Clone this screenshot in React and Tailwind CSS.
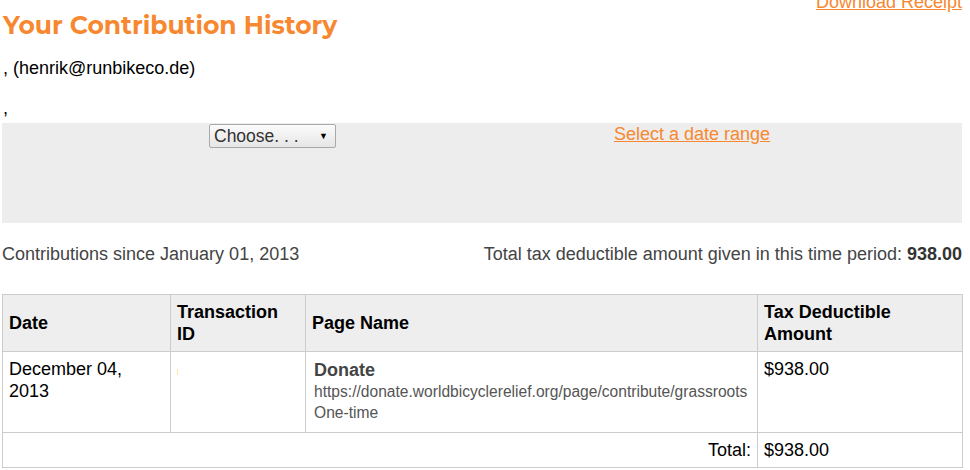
export default function App() {
  const orange = "text-[#f7882f]";
  const cell = "border border-[#cccccc] px-[6px]";
  return (
    <div className="w-[970px] h-[470px] overflow-hidden bg-white font-['Liberation_Sans',Arial,sans-serif] text-black">
      <div className="flex justify-between items-start pl-[3px] pr-[8px] h-[40px]">
        <h1 className={`font-['Montserrat','Open_Sans',sans-serif] font-bold text-[25px] leading-[30px] mt-[10px] ${orange}`}>
          Your Contribution History
        </h1>
        <a className={`text-[18px] leading-[22px] underline -mt-[9px] ${orange}`} href="#">
          Download Receipt
        </a>
      </div>
      <div className="pl-[3px] mt-[17px] text-[18px] leading-[22px]">, (henrik@runbikeco.de)</div>
      <div className="pl-[3px] mt-[18px] text-[18px] leading-[22px] h-[26px]">,</div>
      <div className="mx-[2px] w-[960px] h-[100px] bg-[#ededed] flex items-start">
        <div className="w-[207px] shrink-0" />
        <div className="w-[127px] h-[24px] mt-[1px] border border-[#a9a9a9] rounded-[2px] bg-gradient-to-b from-[#fbfbfb] to-[#e6e6e6] flex items-center justify-between pl-[4px] pr-[7px] text-[17.5px] leading-[20px] text-[#333]">
          <span>Choose. . .</span>
          <span className="text-[9px] text-black">▼</span>
        </div>
        <div className="w-[278px] shrink-0" />
        <a className={`text-[18px] leading-[22px] underline ${orange}`} href="#">Select a date range</a>
      </div>
      <div className="flex justify-between pl-[2px] pr-[8px] mt-[20px] text-[18px] leading-[22px] text-[#444]">
        <span>Contributions since January 01, 2013</span>
        <span>Total tax deductible amount given in this time period: <b className="text-[#333]">938.00</b></span>
      </div>
      <table className="mt-[29px] ml-[2px] w-[961px] table-fixed border-collapse text-[18px] leading-[22px]">
        <colgroup>
          <col className="w-[168px]" />
          <col className="w-[135px]" />
          <col className="w-[452px]" />
          <col />
        </colgroup>
        <thead>
          <tr className="bg-[#eeeeee] h-[57px]">
            <th className={`${cell} py-[6px] text-left align-middle font-bold`}>Date</th>
            <th className={`${cell} py-[6px] text-left align-middle font-bold`}>Transaction<br />ID</th>
            <th className={`${cell} py-[6px] text-left align-middle font-bold`}>Page Name</th>
            <th className={`${cell} py-[6px] text-left align-middle font-bold`}>Tax Deductible<br />Amount</th>
          </tr>
        </thead>
        <tbody>
          <tr className="h-[81px]">
            <td className={`${cell} pt-[6px] align-top`}>December 04,<br />2013</td>
            <td className={`${cell} pt-[6px] align-top`}>
              <span className="block w-[1px] h-[6px] mt-[11px] bg-[#fbe8a8]" />
            </td>
            <td className={`${cell} pt-[7px] pb-[6px] align-top`}>
              <div className="pl-[2px] font-bold text-[18px] leading-[22px] text-[#444]">Donate</div>
              <div className="pl-[2px] text-[15.6px] leading-[21px] text-[#555]">https://donate.worldbicyclerelief.org/page/contribute/grassroots</div>
              <div className="pl-[2px] text-[15.6px] leading-[21px] text-[#555]">One-time</div>
            </td>
            <td className={`${cell} pt-[6px] align-top`}>$938.00</td>
          </tr>
          <tr className="h-[35px]">
            <td colSpan={3} className={`${cell} text-right align-middle`}>Total:</td>
            <td className={`${cell} align-middle`}>$938.00</td>
          </tr>
        </tbody>
      </table>
    </div>
  );
}
